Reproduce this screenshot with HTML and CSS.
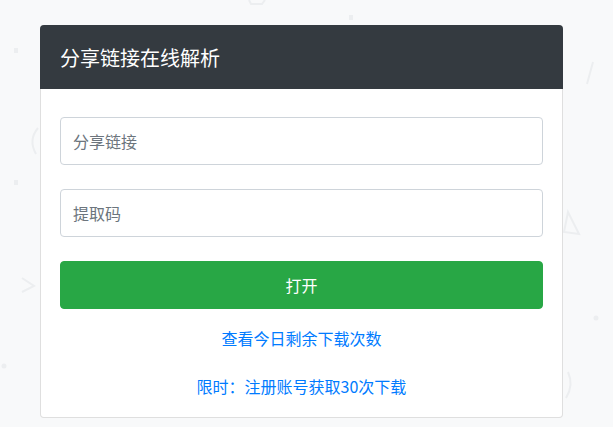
FILE: index.html
```html
<!DOCTYPE html>
<html lang="zh-CN">
<head>
<meta charset="utf-8">
<title>分享链接在线解析</title>
<link rel="stylesheet" href="styles.css">
</head>
<body>
<svg class="bg-shapes" width="613" height="427" viewBox="0 0 613 427" aria-hidden="true">
  <g fill="none" stroke="#eceef0" stroke-width="2">
    <path d="M249 0 L251 4 L262 4 L265 0"/>
    <path d="M593 62 L587 84"/>
    <path d="M38 128 Q28 140 36 154"/>
    <path d="M568 212 L579 234 L564 232 Z"/>
    <path d="M22 278 L34 286 L22 292"/>
    <path d="M568 372 Q574 385 566 398"/>
  </g>
  <g fill="#eceef0">
    <rect x="349" y="15" width="4" height="5"/>
    <rect x="14" y="48" width="4" height="5"/>
    <rect x="14" y="180" width="4" height="5"/>
    <circle cx="596" cy="318" r="2.5"/>
    <circle cx="4" cy="366" r="2.5"/>
  </g>
</svg>
<main class="page">
  <section class="card">
    <header class="card-header">
      <h1 class="card-title">分享链接在线解析</h1>
    </header>
    <div class="card-body">
      <input class="field" type="text" placeholder="分享链接">
      <input class="field" type="text" placeholder="提取码">
      <button class="btn-open" type="button">打开</button>
      <a class="link link-first" href="#">查看今日剩余下载次数</a>
      <a class="link link-second" href="#">限时：注册账号获取30次下载</a>
    </div>
  </section>
</main>
</body>
</html>
```

FILE: styles.css
```css
* {
  box-sizing: border-box;
}

html, body {
  margin: 0;
  padding: 0;
}

body {
  background: #f8f9fa;
  font-family: "Noto Sans CJK SC", "Noto Sans", "Liberation Sans", sans-serif;
  color: #212529;
  width: 613px;
  height: 427px;
  overflow: hidden;
  position: relative;
}

.bg-shapes {
  position: absolute;
  left: 0;
  top: 0;
}

.page {
  position: relative;
  padding: 25px 0 0 40px;
}

.card {
  width: 523px;
  background: #fff;
  border: 1px solid rgba(0, 0, 0, 0.125);
  border-radius: 4px;
  display: flex;
  flex-direction: column;
}

.card-header {
  background: #343a40;
  height: 64px;
  margin: -1px -1px 0;
  border-radius: 4px 4px 0 0;
  display: flex;
  align-items: center;
  padding: 1px 20px 0;
}

.card-title {
  margin: 0;
  font-size: 20px;
  font-weight: 400;
  line-height: 24px;
  color: #fff;
}

.card-body {
  display: flex;
  flex-direction: column;
  padding: 28px 19px 19px;
}

.field {
  height: 48px;
  width: 100%;
  border: 1px solid #ced4da;
  border-radius: 4px;
  padding: 0 12px;
  font-family: inherit;
  font-size: 16px;
  color: #495057;
  background: #fff;
  margin-bottom: 24px;
  outline: none;
}

.field::placeholder {
  color: #6c757d;
  opacity: 1;
}

.btn-open {
  height: 48px;
  width: 100%;
  border: 1px solid #28a745;
  border-radius: 4px;
  background: #28a745;
  color: #fff;
  font-family: inherit;
  font-size: 16px;
  line-height: 24px;
  padding: 0;
  cursor: pointer;
}

.link {
  display: block;
  text-align: center;
  color: #007bff;
  text-decoration: none;
  font-size: 16px;
  line-height: 24px;
}

.link-first {
  margin-top: 17px;
}

.link-second {
  margin-top: 24px;
}
```
